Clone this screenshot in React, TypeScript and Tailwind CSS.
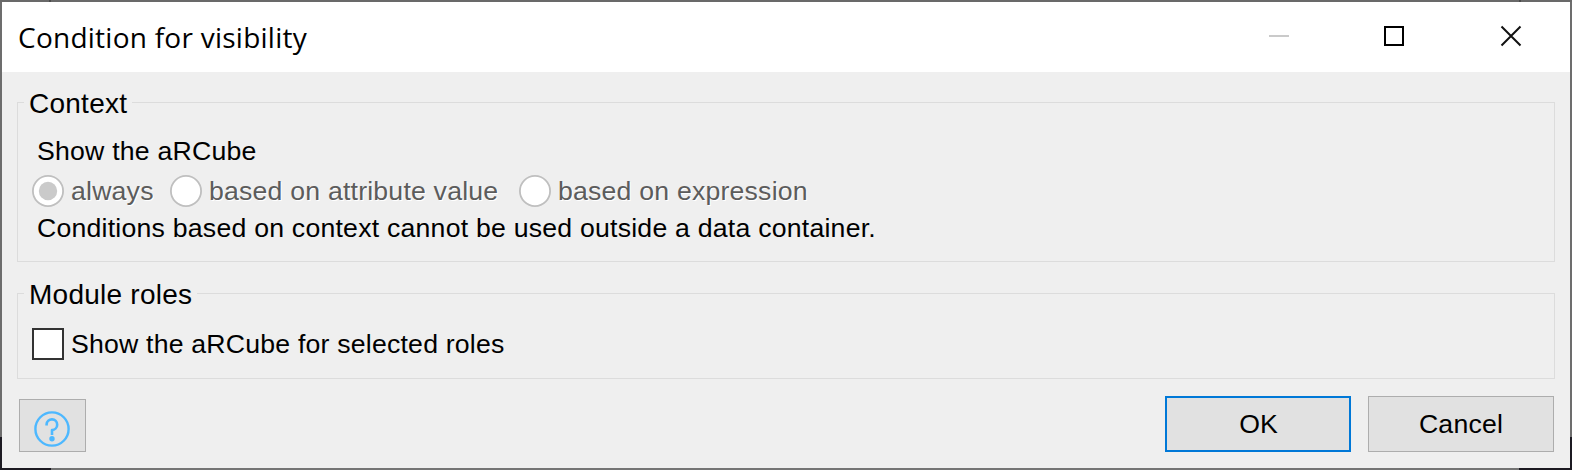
import type { ReactNode } from "react";

function Strip() {
  return (
    <div className="flex w-[2px] flex-col">
      <div className="h-[435px] bg-[#6d6d6d]" />
      <div className="flex-1 bg-[#1c1a22]" />
    </div>
  );
}

function Group({ title, className, children }: { title: string; className: string; children: ReactNode }) {
  return (
    <section className={className}>
      <div className="flex h-[9px] items-start">
        <div className="h-[9px] w-[7px] border-l border-t border-[#dcdcdc]" />
        <h2 className="-mt-[14px] shrink-0 whitespace-pre px-[5px] text-[28px] leading-[32px] tracking-[0.25px]">{title}</h2>
        <div className="h-[9px] flex-1 border-r border-t border-[#dcdcdc]" />
      </div>
      <div className="flex-1 border-x border-b border-[#dcdcdc]">{children}</div>
    </section>
  );
}

function Radio({ label, checked = false }: { label: string; checked?: boolean }) {
  return (
    <label className="flex h-8 items-center gap-[7px]">
      <svg width="32" height="32" viewBox="0 0 32 32" className="shrink-0">
        <circle cx="16" cy="16" r="15.1" fill="#fff" stroke="#bfbfbf" strokeWidth="1.8" />
        {checked && <circle cx="16" cy="16" r="9.2" fill="#cacaca" />}
      </svg>
      <span className="whitespace-nowrap text-[26.67px] leading-[30px] tracking-[0.2px] text-[#5c5c5c] [text-shadow:1px_1px_0_#fff]">
        {label}
      </span>
    </label>
  );
}

export default function App() {
  return (
    <div className="flex h-[470px] w-[1572px] flex-col overflow-hidden bg-[#efefef] font-['Liberation_Sans',Arial,sans-serif] text-black">
      <div className="flex h-[2px] bg-[#696969]">
        <div className="ml-[49px] w-[2px] bg-[#4b4b4b]" />
        <div className="ml-[1468px] w-[2px] bg-[#4b4b4b]" />
      </div>
      <div className="flex h-[466px]">
        <Strip />
        <main className="flex flex-1 flex-col">
          <header className="flex h-[70px] items-center justify-between bg-white pl-[16px]">
            <h1 className="whitespace-nowrap font-['Open_Sans','Noto_Sans',sans-serif] text-[28px] leading-[38px] tracking-[0.25px]">
              Condition for visibility
            </h1>
            <svg width="351" height="70" viewBox="0 0 351 70" fill="none">
              <path d="M50 34h20" stroke="#cacaca" strokeWidth="2" />
              <path d="M166 25h18v18h-18z" stroke="#000" strokeWidth="2" />
              <path d="M282.5 24.5l19 19M301.5 24.5l-19 19" stroke="#111" strokeWidth="2" />
            </svg>
          </header>
          <Group title="Context" className="ml-[15px] mt-[30px] flex h-[160px] w-[1538px] flex-col">
            <p className="mt-[25px] pl-[19px] text-[26.67px] leading-[30px] tracking-[0.22px]">Show the aRCube</p>
            <div className="mt-[9px] flex pl-[14px]">
              <div className="w-[138px]"><Radio label="always" checked /></div>
              <div className="w-[349px]"><Radio label="based on attribute value" /></div>
              <Radio label="based on expression" />
            </div>
            <p className="mt-[6px] pl-[19px] text-[26.67px] leading-[30px] tracking-[0.22px]">
              Conditions based on context cannot be used outside a data container.
            </p>
          </Group>
          <Group title="Module roles" className="ml-[15px] mt-[31px] flex h-[86px] w-[1538px] flex-col">
            <label className="ml-[14px] mt-[26px] flex h-8 items-center gap-[7px]">
              <span className="size-8 border-2 border-[#333] bg-white" />
              <span className="text-[26.67px] leading-[30px] tracking-[0.2px]">Show the aRCube for selected roles</span>
            </label>
          </Group>
          <footer className="mt-[17px] flex pl-[17px] pr-[16px]">
            <button className="mt-[3px] flex h-[53px] w-[67px] border border-[#adadad] bg-[#e1e1e1]" aria-label="Help">
              <svg width="36" height="36" viewBox="0 0 36 36" fill="none" stroke="#4db8ff" className="ml-[14px] mt-[11px]">
                <circle cx="18" cy="18" r="16.6" strokeWidth="2.4" />
                <path d="M12.6 14.6v-1.2a5.3 5.3 0 1 1 5.4 5.6v5" strokeWidth="2.6" strokeLinejoin="round" />
                <circle cx="18" cy="27.8" r="2.7" fill="#4db8ff" stroke="none" />
              </svg>
            </button>
            <button className="ml-auto h-[56px] w-[186px] border-2 border-[#0078d7] bg-[#e1e1e1] pl-[1px] text-[26.67px] leading-[52px]">OK</button>
            <button className="ml-[17px] h-[56px] w-[186px] border border-[#adadad] bg-[#e1e1e1] text-[26.67px] leading-[54px] tracking-[0.2px]">Cancel</button>
          </footer>
        </main>
        <Strip />
      </div>
      <div className="flex h-[2px]">
        <div className="w-[51px] bg-[#1c1a22]" />
        <div className="flex-1 bg-[#747474]" />
        <div className="w-[53px] bg-[#1c1a22]" />
      </div>
    </div>
  );
}
